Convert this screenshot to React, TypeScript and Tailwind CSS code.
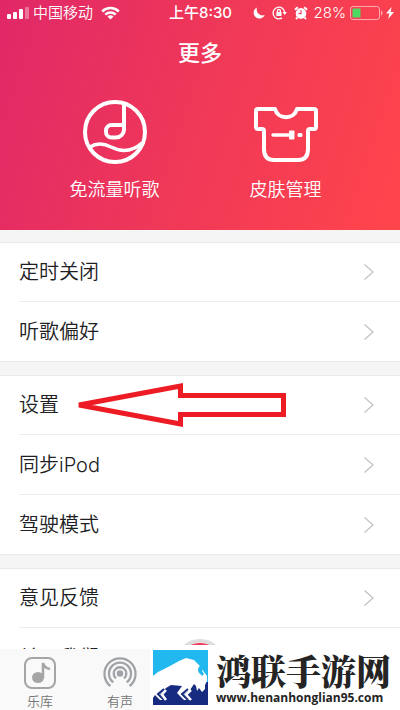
import React from "react";

const groups: string[][] = [
  ["定时关闭", "听歌偏好"],
  ["设置", "同步iPod", "驾驶模式"],
  ["意见反馈", "关于我们"],
];

function StatusBar() {
  return (
    <div className="grid h-[26px] grid-cols-[1fr_auto_1fr] items-center pl-[7px] pr-[6px] text-[15px] leading-5">
      <div className="flex items-center">
        <svg width="22" height="12" viewBox="0 0 22 12" fill="currentColor" aria-hidden="true">
          <rect x="0" y="7" width="4" height="5" rx="1" />
          <rect x="6" y="5" width="4" height="7" rx="1" />
          <rect x="12" y="2" width="4" height="10" rx="1" />
          <rect x="18" y="0" width="4" height="12" rx="1" opacity=".35" />
        </svg>
        <span className="ml-1">中国移动</span>
        <svg className="ml-2" width="19" height="14" viewBox="0 0 19 14" fill="none" stroke="currentColor" strokeWidth="2.5" aria-hidden="true">
          <path d="M1.2 5.5a11.8 11.8 0 0 1 16.6 0" />
          <path d="M4.3 8.7a7.4 7.4 0 0 1 10.4 0" />
          <path d="M9.5 13.6 6.5 10.6a4.2 4.2 0 0 1 6 0z" fill="currentColor" stroke="none" />
        </svg>
      </div>
      <span className="font-medium">上午8:30</span>
      <div className="flex items-center justify-end">
        <svg width="12" height="12" viewBox="0 0 12 12" fill="currentColor" aria-hidden="true">
          <path d="M4 .5A5.8 5.8 0 1 0 11.8 8 6 6 0 0 1 4 .5z" />
        </svg>
        <svg className="ml-[7px]" width="15" height="14" viewBox="0 0 15 14" fill="none" stroke="currentColor" strokeWidth="1.3" aria-hidden="true">
          <path d="M12.7 7A5.8 5.8 0 1 0 10 11.9" />
          <path d="M10.5 6h4.4l-2.2 3z" fill="currentColor" stroke="none" />
          <rect x="4.3" y="6" width="5.2" height="4" rx=".5" fill="currentColor" stroke="none" />
          <path d="M5.4 6V5a1.5 1.5 0 0 1 3 0v1" />
        </svg>
        <svg className="ml-[7px]" width="14" height="14" viewBox="0 0 14 14" fill="none" aria-hidden="true">
          <circle cx="7" cy="7.4" r="5.3" fill="currentColor" />
          <path d="M1 3.8 3.8 1.2M13 3.8l-2.8-2.6M3.3 11.6 2 13M10.7 11.6 12 13" stroke="currentColor" strokeWidth="2" />
          <path d="M7 4v3.6H4.5" stroke="#f23a59" strokeWidth="1.1" />
        </svg>
        <span className="ml-1.5">28%</span>
        <svg className="ml-1" width="33" height="14" viewBox="0 0 33 14" fill="none" aria-hidden="true">
          <rect x=".5" y=".5" width="29" height="13" rx="2.5" stroke="#fff" strokeOpacity=".55" />
          <rect x="2.5" y="2.5" width="8" height="9" fill="#4cd964" />
          <path d="M31 4.5c2 .6 2 4.4 0 5z" fill="#fff" fillOpacity=".55" />
        </svg>
        <svg className="ml-[3px]" width="8" height="12" viewBox="0 0 8 12" fill="currentColor" aria-hidden="true">
          <path d="M5.6 0 0 6.6h3.4L2.2 12 8 5H4.6z" />
        </svg>
      </div>
    </div>
  );
}

function MusicIcon() {
  return (
    <svg width="64" height="64" viewBox="0 0 64 64" fill="none" stroke="currentColor" strokeWidth="4" aria-hidden="true">
      <circle cx="32" cy="32" r="30" />
      <path d="M41 4v25.500a8 8 0 0 1-8 8h-4.500a5.500 5.500 0 0 1-5.500-5.500v-1.500a5.500 5.500 0 0 1 5.500-5.500H41" />
      <path d="M7 47c7-4.500 14-3.500 21 0 12 6 22 4 31-4" strokeWidth="3.500" />
    </svg>
  );
}

function ShirtIcon() {
  return (
    <svg width="66" height="64" viewBox="0 0 66 64" fill="none" stroke="currentColor" strokeWidth="4" strokeLinejoin="round" strokeLinecap="round" aria-hidden="true">
      <path d="M5 9H22c3 11 19 11 22 0h17q2 0 2 2v16q0 2-2 2h-4q-2 0-2 2v18q0 11-10 11H21q-10 0-10-11V31q0-2-2-2H5q-2 0-2-2V11q0-2 2-2z" />
      <path d="M20 35h18" strokeWidth="3.500" />
      <rect x="36" y="30.500" width="5.500" height="9" rx="1" fill="currentColor" stroke="none" />
      <rect x="44.500" y="33" width="5" height="4" rx="1.500" fill="currentColor" stroke="none" />
    </svg>
  );
}

function Feature({ label, children }: { label: string; children: React.ReactNode }) {
  return (
    <button type="button" className="flex flex-1 flex-col items-center text-lg leading-6">
      {children}
      <span className="mt-3.5">{label}</span>
    </button>
  );
}

function Row({ label }: { label: string }) {
  return (
    <button
      type="button"
      className="flex h-[60px] w-full items-center justify-between border-t border-[#ececec] pr-[26px] text-left text-xl leading-6 text-[#202022] first:h-[58px] first:border-t-0"
    >
      {label}
      <svg width="10" height="16" viewBox="0 0 10 16" fill="none" stroke="#c2c2c8" strokeWidth="1.300" aria-hidden="true">
        <path d="m.5.5 8.500 7.500L.5 15.500" />
      </svg>
    </button>
  );
}

function PointerArrow() {
  return (
    <svg className="pointer-events-none absolute left-[70px] top-1" width="220" height="50" viewBox="0 0 220 50" fill="none" stroke="#ed1c24" strokeWidth="5" strokeLinejoin="miter" strokeMiterlimit="3" aria-hidden="true">
      <path d="M9 25 110.500 6v9.500H213.500v19H110.500V44z" />
    </svg>
  );
}

function Watermark() {
  return (
    <div className="relative -mt-1 flex flex-1 items-start bg-white pl-[3px] pt-[5px]">
      <svg className="shrink-0" width="55" height="55" viewBox="0 0 55 55" aria-hidden="true">
        <path d="M0 0h55v55H0z" fill="#21b8ef" />
        <path d="M0 32h55v23H0z" fill="#172b80" />
        <path
          d="M0 26 5 22 17 16 26 11 33 8 41 10 46 15 51 22 54 26 54 31 52 35 52 39 49 42 46 38 44 41 43 36 41 34 37 40 31 44 36 50 31 50 24 43 29 36 18 35 13 38 7 44 12 50 7 50 2 45 0 48z"
          fill="#fff"
        />
        <path d="M11 39 5 44 11 50M35 39 29 44 35 50" fill="none" stroke="#172b80" strokeWidth="2" />
        <path d="M13 40 9 44.500 13 50M38 40 33 44.500 38 50" fill="none" stroke="#fff" strokeWidth="2.500" />
        <path d="M49 11c1 4-4 5-4 9 0 3 3 4 4 6l2-2-2-3 2-4z" fill="#21b8ef" />
      </svg>
      <div className="ml-2 flex flex-col items-start whitespace-nowrap text-[#242424]">
        <span className="font-['Noto_Serif_CJK_SC','Noto_Sans_CJK_SC',serif] text-[35px] font-black leading-[40px]">鸿联手游网</span>
        <a href="#home" className="font-['Open_Sans',sans-serif] text-xs font-bold leading-4">
          www.henanhonglian95.com
        </a>
      </div>
    </div>
  );
}

export default function App() {
  return (
    <div className="flex h-screen flex-col overflow-hidden bg-[#f5f5f5] font-[Inter,'Noto_Sans_CJK_SC',sans-serif] font-[350]">
      <header className="shrink-0 bg-[linear-gradient(108deg,#e02868_0%,#f03858_50%,#ff454b_100%)] pb-7 text-white">
        <StatusBar />
        <h1 className="pt-3 text-center text-[22px] font-medium leading-[30px]">更多</h1>
        <div className="mt-8 flex px-[29px]">
          <Feature label="免流量听歌"><MusicIcon /></Feature>
          <Feature label="皮肤管理"><ShirtIcon /></Feature>
        </div>
      </header>
      <main className="flex min-h-0 flex-1 flex-col gap-[13px] overflow-hidden pt-3">
        {groups.map((rows, i) => (
          <section key={rows[0]} className="relative shrink-0 border-y border-[#e9e9e9] bg-white pl-[19px]">
            {rows.map((label) => <Row key={label} label={label} />)}
            {i === 1 && <PointerArrow />}
          </section>
        ))}
      </main>
      <footer className="relative flex h-[61px] shrink-0 bg-[#f9f9f9]">
        <div className="absolute -top-[10px] left-1/2 size-[50px] -translate-x-1/2 rounded-full border-4 border-[#dedede] bg-[#f5335c]" />
        <nav className="flex w-[150px] shrink-0 text-[13px] leading-4 text-[#757575]">
          <button type="button" className="flex w-20 shrink-0 flex-col items-center pt-2">
            <svg width="32" height="32" viewBox="0 0 32 32" fill="none" stroke="#a5a5a5" strokeWidth="2" aria-hidden="true">
              <rect x="1" y="1" width="30" height="30" rx="7" />
              <ellipse cx="14" cy="20.500" rx="6" ry="5.500" fill="#a5a5a5" stroke="none" />
              <path d="M19 21V6q1 5 7 6" strokeWidth="2.500" />
            </svg>
            <span className="mt-1">乐库</span>
          </button>
          <button type="button" className="flex w-20 shrink-0 flex-col items-center pt-2">
            <svg width="34" height="32" viewBox="0 0 34 32" fill="none" stroke="#a0a4a8" strokeWidth="2.300" aria-hidden="true">
              <circle cx="17" cy="16.500" r="3.300" fill="#a0a4a8" stroke="none" />
              <path d="M13 21.400a6.300 6.300 0 1 1 8 0M10.300 25.300a11 11 0 1 1 13.400 0M7.400 29a15.500 15.500 0 1 1 19.200 0" />
            </svg>
            <span className="mt-1">有声</span>
          </button>
        </nav>
        <Watermark />
      </footer>
    </div>
  );
}
